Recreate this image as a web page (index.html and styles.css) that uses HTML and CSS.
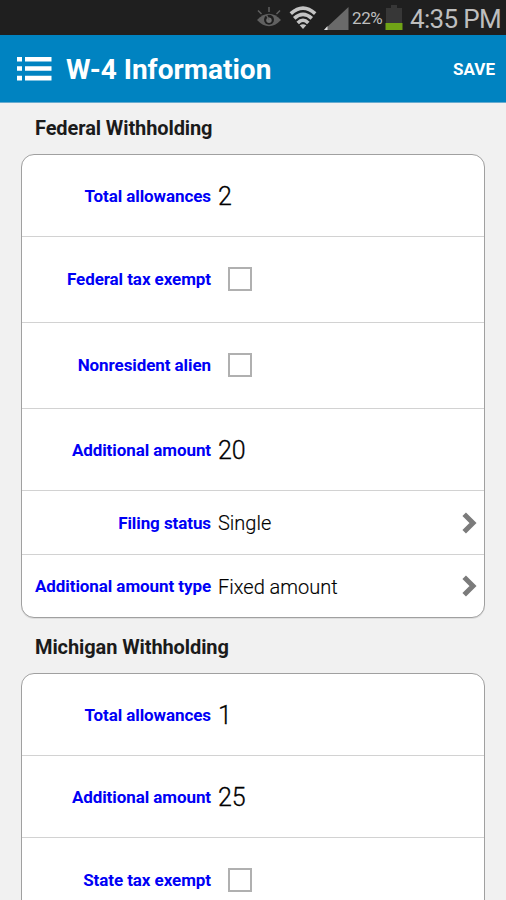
FILE: index.html
```html
<!DOCTYPE html>
<html lang="en">
<head>
<meta charset="utf-8">
<title>W-4 Information</title>
<link rel="stylesheet" href="styles.css">
</head>
<body>
<div class="status">
  <svg class="eye" width="26" height="22" viewBox="0 0 26 22" fill="none" stroke="#606060" stroke-width="1.5">
    <path d="M1 14Q13 1.5 25 14Q13 26.5 1 14Z" fill="#606060" stroke="none"/>
    <circle cx="13" cy="13.8" r="5" fill="#1f1f1f" stroke="none"/>
    <circle cx="13" cy="14.3" r="2.7" fill="#707070" stroke="none"/>
    <path d="M13 1V6M10.5 9L13 14M2 4.5L5.5 8M24 4.5L20.5 8"/>
  </svg>
  <svg class="wifi" width="28" height="24" viewBox="0 0 28 24" fill="none" stroke="#c4c4c4" stroke-width="3.6">
    <path d="M1.8 7.6Q14-3.4 26.2 7.6M5.2 12.4Q14 4.4 22.8 12.4M8.7 17Q14 11.6 19.3 17"/>
    <path d="M10.7 19.3Q14 17 17.3 19.3L14 23Z" fill="#c4c4c4" stroke="none"/>
  </svg>
  <svg class="signal" width="25" height="23" viewBox="0 0 25 23">
    <path d="M24.5 0V23H0Z" fill="#6a6a6a"/>
    <path d="M3.5 19V23H0Z" fill="#e0e0e0"/>
  </svg>
  <span class="percent">22%</span>
  <svg class="battery" width="18" height="25" viewBox="0 0 18 25">
    <path d="M6 0H12V3H17V18H1V3H6Z" fill="#373737"/>
    <path d="M0.5 18H17.5V25H0.5Z" fill="#70a316"/>
  </svg>
  <span class="clock">4:35 PM</span>
</div>
<header class="bar">
  <svg class="menu" width="35" height="24" viewBox="0 0 35 24" fill="#fff">
    <path d="M0 0H5V4.6H0ZM8 0H34.5V4.6H8ZM0 9.2H5V13.8H0ZM8 9.2H34.5V13.8H8ZM0 18.8H5V23.4H0ZM8 18.8H34.5V23.4H8Z"/>
  </svg>
  <h1 class="title">W-4 Information</h1>
  <span class="save">SAVE</span>
</header>
<main>
  <h2 class="heading">Federal Withholding</h2>
  <section class="card shadow">
    <div class="row"><span class="label">Total allowances</span><span class="number">2</span></div>
    <div class="row tall"><span class="label">Federal tax exempt</span><i class="check"></i></div>
    <div class="row tall"><span class="label">Nonresident alien</span><i class="check"></i></div>
    <div class="row"><span class="label">Additional amount</span><span class="number">20</span></div>
    <div class="row short"><span class="label">Filing status</span><span class="choice">Single</span>
      <svg class="chevron" width="15" height="22" viewBox="0 0 15 22"><path d="M2.2 2.2L11 11L2.2 19.8" fill="none" stroke="#7b7b7b" stroke-width="5"/></svg></div>
    <div class="row short"><span class="label">Additional amount type</span><span class="choice">Fixed amount</span>
      <svg class="chevron" width="15" height="22" viewBox="0 0 15 22"><path d="M2.2 2.2L11 11L2.2 19.8" fill="none" stroke="#7b7b7b" stroke-width="5"/></svg></div>
  </section>
  <h2 class="heading michigan">Michigan Withholding</h2>
  <section class="card">
    <div class="row"><span class="label">Total allowances</span><span class="number">1</span></div>
    <div class="row"><span class="label">Additional amount</span><span class="number">25</span></div>
    <div class="row tall"><span class="label">State tax exempt</span><i class="check"></i></div>
  </section>
</main>
</body>
</html>
```
FILE: styles.css
```css
* { box-sizing: border-box; }
html, body { height: 900px; overflow: hidden; }
body { margin: 0; background: #f1f1f1; color: #000; font-family: Roboto, "Liberation Sans", sans-serif; }
svg { display: block; flex: none; }
span { white-space: nowrap; }
.status { height: 35px; background: #1f1f1f; color: #bebebe; display: flex; align-items: flex-start; padding-left: 256px; }
.eye { margin-top: 6px; }
.wifi { margin: 6px 0 0 7px; }
.signal { margin: 7px 0 0 7px; }
.percent { width: 33px; margin-left: 3px; font-size: 17px; line-height: 36px; letter-spacing: -0.4px; }
.battery { margin: 5px 0 0 0; }
.clock { margin-left: 7px; font-size: 26px; line-height: 38px; letter-spacing: -0.65px; }
.bar { height: 68px; background: #0083c1; border-bottom: 1px solid #68acd0; color: #fff; display: flex; align-items: center; padding: 1px 11px 0 17px; }
.title { margin: 2px 0 0 14px; font-size: 28px; line-height: 34px; font-weight: 700; }
.save { margin-left: auto; font-size: 17px; font-weight: 700; }
.heading { margin: 0; height: 51px; padding: 0 0 1px 35px; color: #1b1b1b; font-size: 20px; line-height: 50px; font-weight: 700; letter-spacing: -0.1px; }
.michigan { height: 55px; line-height: 58px; }
.card { width: 464px; margin-left: 21px; background: #fff; border: 1px solid #a0a0a0; border-radius: 13px; }
.shadow { box-shadow: 0 1px 0 #dedede; }
.row { height: 82px; border-bottom: 1px solid #d2d2d2; display: flex; align-items: center; }
.tall { height: 86px; padding-bottom: 2px; }
.short { height: 64px; }
.row:last-child { border-bottom: 0; }
.short:last-child { height: 62px; }
.label { width: 189px; text-align: right; color: #0000f5; font-size: 17px; font-weight: 700; letter-spacing: -0.08px; }
.number { margin: 2px 0 0 7px; font-size: 25px; font-weight: 300; -webkit-text-stroke: 0.3px #000; }
.choice { margin: 1px 0 0 7px; font-size: 20px; font-weight: 300; color: #000; -webkit-text-stroke: 0.15px #000; }
.check { width: 24px; height: 24px; margin-left: 17px; border: 2px solid #b0b0b0; }
.chevron { margin: 0 7px 0 auto; }
```
